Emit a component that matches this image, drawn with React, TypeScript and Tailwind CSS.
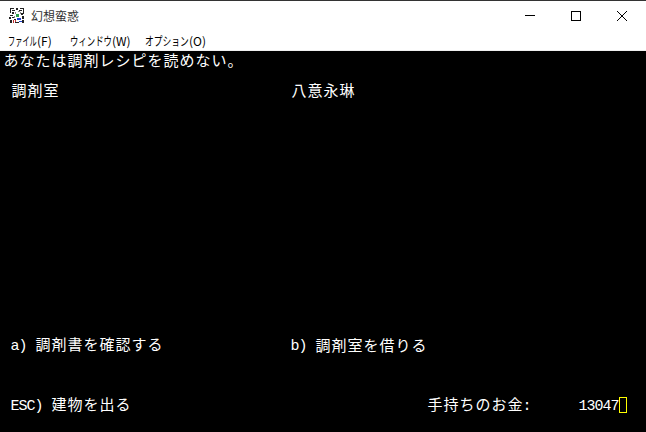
import React from "react";

const CJK = "font-['Noto_Sans_CJK_JP',sans-serif] text-[15px]";
const LATIN = "font-['Liberation_Mono',monospace] text-[15px]";

const Row: React.FC<{ children?: React.ReactNode; className?: string }> = ({ children, className }) => (
  <div className={`flex h-[15px] items-center leading-[15px] whitespace-pre ${className ?? ""}`}>{children}</div>
);

// one full-width char per 16px cell, like the console grid
const Cells: React.FC<{ text: string }> = ({ text }) => (
  <span className={`flex ${CJK}`}>
    {Array.from(text).map((c, i) => (
      <span key={i} className="w-4 text-center">
        {c}
      </span>
    ))}
  </span>
);

const Half: React.FC<{ text: string }> = ({ text }) => (
  <span className={`flex pt-[3px] ${LATIN}`}>
    {Array.from(text).map((c, i) => (
      <span key={i} className="flex w-2 justify-center">
        {c}
      </span>
    ))}
  </span>
);

// kana in the Windows menu font are much narrower than Noto's
const MenuItem: React.FC<{ kana: string; accel: string; box: string; squeeze: string; accelBox: string }> = ({
  kana,
  accel,
  box,
  squeeze,
  accelBox,
}) => (
  <span className="flex whitespace-nowrap">
    <span className={box}>
      <span className={`inline-block origin-left ${squeeze}`}>{kana}</span>
    </span>
    <span className={accelBox}>{accel}</span>
  </span>
);

const AppIcon = () => (
  <svg width="16" height="16" viewBox="0 0 16 16" shapeRendering="crispEdges" className="shrink-0">
    <path d="M1 0h4v1H1zM7 0h2v2H7zM11 0h4v1h-4zM1 1h1v4H1zM3 2h3v1H3zM10 2h3v1h-3zM14 1h1v5h-1zM3 4h2v2H3zM1 7h3v1H1zM12 5h2v2h-2zM13 8h2v3h-2zM0 9h2v2H0zM3 9h2v1H3zM1 12h2v3H1zM5 11h2v1H5zM6 14h4v1H6zM13 12h2v3h-2z" fill="#222" />
    <path d="M6 4h1v2H6zM9 3h2v1H9zM5 8h1v2H5zM11 4h1v2h-1z" fill="#888" />
    <path d="M7 6h3v3H7z" fill="#2a9d4a" />
    <path d="M8 10h4v2H8zM10 13h3v1h-3z" fill="#2040d0" />
    <path d="M4 12h1v3H4zM6 12h1v2H6z" fill="#c03030" />
  </svg>
);

export default function App() {
  return (
    <div className="flex h-[432px] w-[646px] flex-col overflow-hidden bg-black font-['Noto_Sans_CJK_JP',sans-serif]">
      <div className="flex h-[30px] shrink-0 items-center border-t border-[#333] bg-white">
        <div className="ml-[9px] flex items-center">
          <AppIcon />
          <span className="ml-[6px] text-[12px] text-[#333]">幻想蛮惑</span>
        </div>
        <div className="ml-auto flex h-full items-center pr-px">
          <div className="flex h-full w-[46px] items-center justify-center">
            <div className="h-px w-[10px] bg-black" />
          </div>
          <div className="flex h-full w-[46px] items-center justify-center">
            <div className="h-[10px] w-[10px] border border-black" />
          </div>
          <div className="flex h-full w-[46px] items-center justify-center">
            <svg width="10" height="10" viewBox="0 0 10 10">
              <path d="M0 0L10 10M10 0L0 10" stroke="#000" strokeWidth="1" fill="none" />
            </svg>
          </div>
        </div>
      </div>
      <div className="flex h-[21px] shrink-0 items-center gap-[14px] border-b border-[#f0f0f0] bg-white pl-[8px] pt-px text-[12px] text-black">
        <MenuItem kana="ファイル" accel="(F)" box="w-[29px]" squeeze="scale-x-[0.6]" accelBox="w-[19px]" />
        <MenuItem kana="ウィンドウ" accel="(W)" box="w-[42px]" squeeze="scale-x-[0.7]" accelBox="w-[19px]" />
        <MenuItem kana="オプション" accel="(O)" box="w-[44px]" squeeze="scale-x-[0.73]" accelBox="w-[17px]" />
      </div>
      <div className="flex flex-1 flex-col pl-[3px] pt-px text-white">
        <Row>
          <Cells text="あなたは調剤レシピを読めない。" />
        </Row>
        <Row />
        <Row>
          <span className="w-2" />
          <span className="w-[280px]">
            <Cells text="調剤室" />
          </span>
          <Cells text="八意永琳" />
        </Row>
        <div className="h-[240px]" />
        <Row>
          <span className="w-2" />
          <span className="flex w-[280px]">
            <Half text="a) " />
            <Cells text="調剤書を確認する" />
          </span>
          <Half text="b) " />
          <Cells text="調剤室を借りる" />
        </Row>
        <div className="h-[45px]" />
        <Row>
          <span className="w-2" />
          <span className="flex w-[416px]">
            <Half text="ESC) " />
            <Cells text="建物を出る" />
          </span>
          <span className="flex w-[152px]">
            <Cells text="手持ちのお金" />
            <Half text=":" />
          </span>
          <Half text="13047" />
          <span className="h-[16px] w-2 border border-[#ffff00]" />
        </Row>
      </div>
    </div>
  );
}
